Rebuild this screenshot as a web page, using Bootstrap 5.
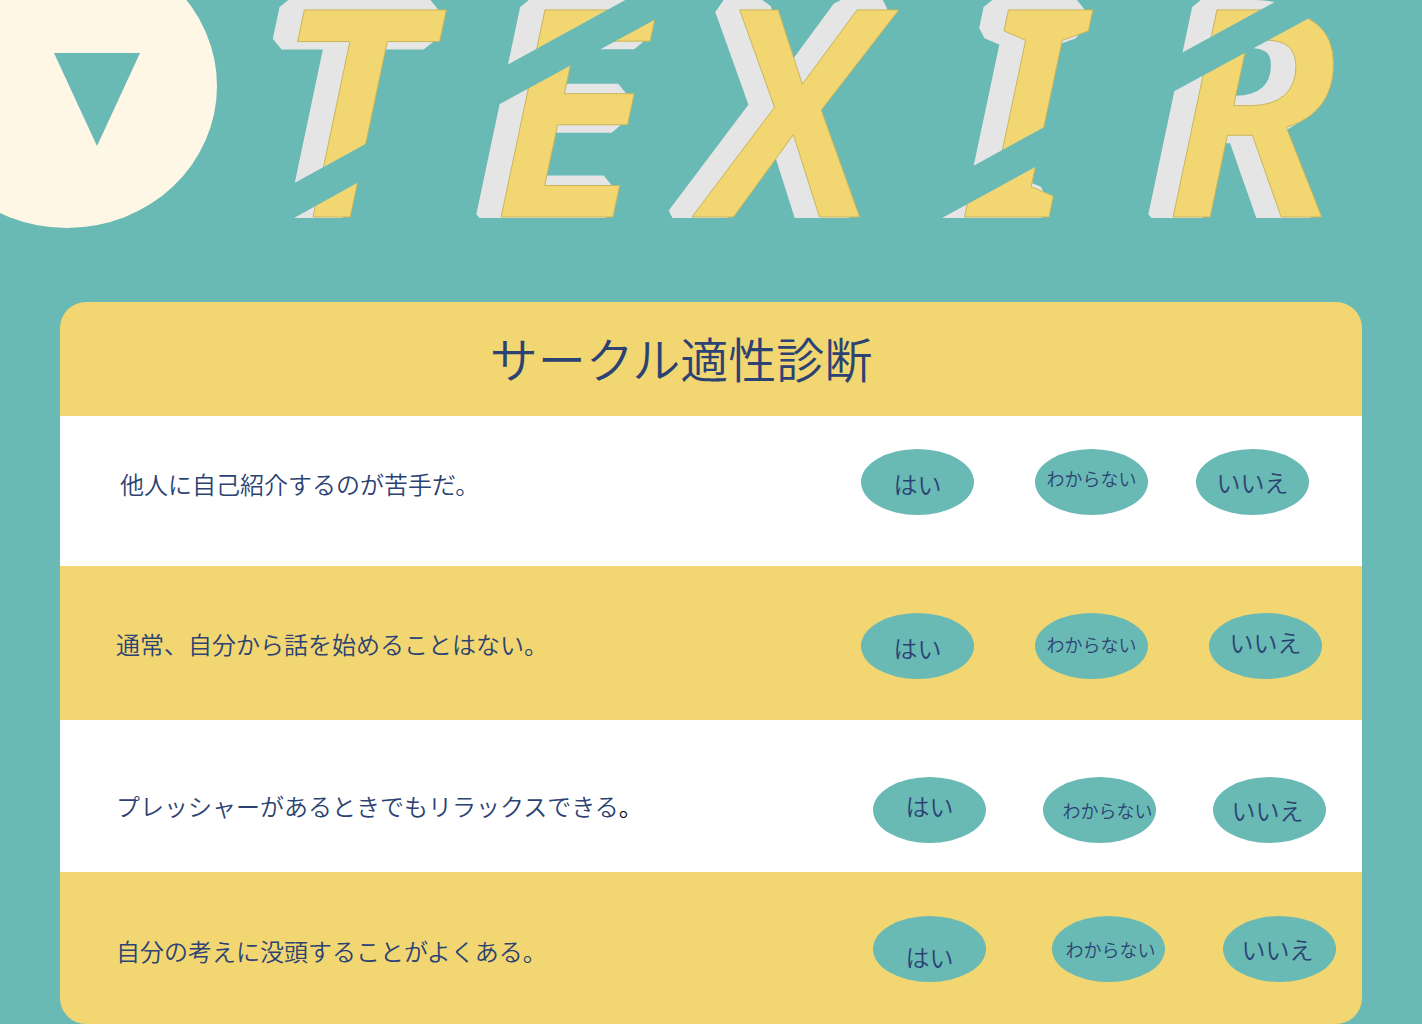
<!DOCTYPE html>
<html lang="ja">
<head>
<meta charset="utf-8">
<meta name="viewport" content="width=device-width, initial-scale=1">
<title>サークル適性診断 | TEXIR</title>
<link href="https://cdn.jsdelivr.net/npm/bootstrap@5.3.0/dist/css/bootstrap.min.css" rel="stylesheet">
<style>
  :root { --teal: #69b9b4; --sand: #f1d672; --navy: #2b4272; --cream: #fef7e6; }
  body { background: var(--teal); color: var(--navy); font-family: "Noto Sans CJK JP", sans-serif; font-size: 24px; font-weight: 350; line-height: 36px; }
  .masthead { margin-bottom: 74px; }
  .brand-art text { font-family: "Noto Sans", sans-serif; font-style: italic; font-weight: 600; font-size: 290px; }
  .brand-back { fill: #e5e5e5; stroke: #e5e5e5; stroke-width: 18px; stroke-linejoin: bevel; }
  .brand-face { fill: var(--sand); stroke: #c9b65c; stroke-width: 1px; }
  .quiz { padding: 0 60px; }
  .quiz-head { background: var(--sand); border-radius: 26px 26px 0 0; padding: 31px 60px 35px 0; }
  .quiz-title { font-size: 48px; line-height: 48px; font-weight: 350; }
  .quiz-item.sand { background: var(--sand); }
  .quiz-item:last-child { border-radius: 0 0 26px 26px; }
  .prompt { margin: 0 0 4px; }
  .item-a { padding: 33px 53px 51px 60px; }
  .item-b { padding: 47px 40px 41px 56px; }
  .item-c { padding: 57px 36px 29px 56px; }
  .item-d { padding: 44px 26px 42px 56px; }
  .choices { display: grid; flex: none; }
  .item-a .choices { grid-template-columns: 174px 161px 113px; }
  .item-b .choices { grid-template-columns: 174px 174px 113px; }
  .item-c .choices { grid-template-columns: 170px 170px 113px; }
  .item-d .choices { grid-template-columns: 179px 171px 113px; }
  .choice { width: 113px; height: 66px; border: 0; border-radius: 50%; background: var(--teal); color: var(--navy); font-size: 24px; font-weight: 350; line-height: 36px; white-space: nowrap; }
  .choice-long { font-size: 18px; }
  .choice:hover { background: #58aaa5; }
</style>
</head>
<body>
<header class="masthead">
  <svg class="brand-art d-block w-100" viewBox="0 0 1422 228" role="img" aria-label="TEXIR">
    <defs>
      <clipPath id="brandClip"><rect x="240" y="0" width="1182" height="218"/></clipPath>
      <g id="brandLetters">
        <text x="273" y="217">T</text><text x="492" y="217">E</text><text x="708" y="217">X</text><text x="972" y="217">I</text><text x="1164" y="217">R</text>
      </g>
    </defs>
    <ellipse cx="67" cy="86" rx="150" ry="142" fill="#fef7e6"/>
    <path d="M54 53H140L97 146Z" fill="#69b9b4"/>
    <g clip-path="url(#brandClip)">
      <use href="#brandLetters" class="brand-back" x="-16" y="-1"/>
      <use href="#brandLetters" class="brand-face"/>
      <!-- diagonal slashes through the letters -->
      <g fill="#69b9b4">
        <path d="M258 203L402 124V158L258 238Z"/>
        <path d="M465 88L680 -30V6L465 123Z"/>
        <path d="M920 195L1083 106V141L920 230Z"/>
        <path d="M1145 73L1350 -39V-4L1145 107Z"/>
      </g>
    </g>
  </svg>
</header>
<main class="quiz">
  <div class="quiz-head text-center"><h1 class="quiz-title m-0">サークル適性診断</h1></div>
  <section class="quiz-item item-a bg-white d-flex justify-content-between align-items-center">
    <p class="prompt pt-2" id="q1">他人に自己紹介するのが苦手だ。</p>
    <div class="choices" role="group" aria-labelledby="q1">
      <button type="button" class="choice p-0 pt-1">はい</button>
      <button type="button" class="choice choice-long p-0 pb-2">わからない</button>
      <button type="button" class="choice p-0">いいえ</button>
    </div>
  </section>
  <section class="quiz-item item-b sand d-flex justify-content-between align-items-center">
    <p class="prompt" id="q2">通常、自分から話を始めることはない。</p>
    <div class="choices" role="group" aria-labelledby="q2">
      <button type="button" class="choice p-0 pt-1">はい</button>
      <button type="button" class="choice choice-long p-0 pb-1">わからない</button>
      <button type="button" class="choice p-0 pb-2">いいえ</button>
    </div>
  </section>
  <section class="quiz-item item-c bg-white d-flex justify-content-between align-items-center">
    <p class="prompt pb-1" id="q3">プレッシャーがあるときでもリラックスできる<span class="text-black">。</span></p>
    <div class="choices" role="group" aria-labelledby="q3">
      <button type="button" class="choice p-0 pb-2">はい</button>
      <button type="button" class="choice choice-long p-0 ps-3">わからない</button>
      <button type="button" class="choice p-0 pe-1">いいえ</button>
    </div>
  </section>
  <section class="quiz-item item-d sand d-flex justify-content-between align-items-center">
    <p class="prompt pt-2" id="q4">自分の考えに没頭することがよくある。</p>
    <div class="choices" role="group" aria-labelledby="q4">
      <button type="button" class="choice p-0 pt-3">はい</button>
      <button type="button" class="choice choice-long p-0 ps-1">わからない</button>
      <button type="button" class="choice p-0 pe-1">いいえ</button>
    </div>
  </section>
</main>
<script src="https://cdn.jsdelivr.net/npm/bootstrap@5.3.0/dist/js/bootstrap.bundle.min.js"></script>
</body>
</html>
